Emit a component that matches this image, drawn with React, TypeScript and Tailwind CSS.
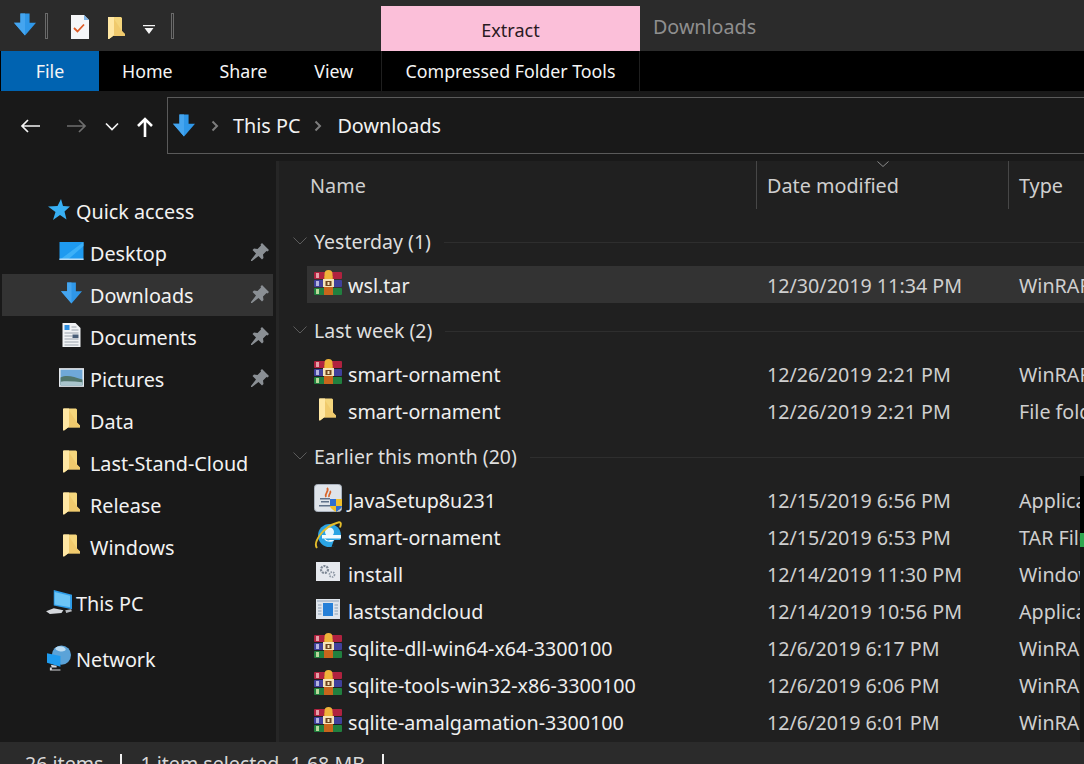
import React from 'react'

const FONT = "font-['Noto_Sans',sans-serif]"

function BlueArrow({ className }: { className?: string }) {
  return (
    <svg viewBox="0 0 24 24" className={className}>
      <path d="M7 0h10v10h7L12 24 0 10h7z" fill="#2f97e8" />
      <path d="M7 0h5v24L0 10h7z" fill="#45a5ef" />
    </svg>
  )
}

function Folder({ className }: { className?: string }) {
  return (
    <svg viewBox="0 0 17 23" className={className}>
      <path d="M1 1h12l1 1v13l3 3v2H5l-4 3z" fill="#f5d67c" />
      <path d="M0 1h6v18l-1 1-4 3H0z" fill="#ffe7a3" />
      <path d="M6 3l8 12 3 3v2H5l1-1z" fill="#eec566" opacity="0.7" />
    </svg>
  )
}

function Rar({ className }: { className?: string }) {
  return (
    <svg viewBox="0 0 28 25" className={className}>
      <rect x="0" y="2" width="28" height="7" rx="1" fill="#b0223f" />
      <rect x="0" y="10" width="28" height="7" rx="1" fill="#40409c" />
      <rect x="0" y="18" width="28" height="7" rx="1" fill="#21803f" />
      <rect x="2" y="3" width="3" height="5" fill="#e4a0a8" />
      <rect x="2" y="11" width="3" height="5" fill="#b5b5e0" />
      <rect x="2" y="19" width="3" height="5" fill="#b8d89a" />
      <rect x="10" y="6" width="9" height="19" fill="#c8651c" />
      <path d="M10.500 9V4a4 4 0 0 1 8 0v5z" fill="#efb33a" />
      <rect x="9" y="9" width="11" height="8" fill="#f4e3b8" />
      <rect x="11.500" y="11" width="6" height="5" fill="#6e4520" />
      <rect x="13.500" y="12" width="2" height="3" fill="#f4e3b8" />
    </svg>
  )
}

function Java({ className }: { className?: string }) {
  return (
    <svg viewBox="0 0 28 28" className={className}>
      <rect x="0.500" y="0.500" width="27" height="27" rx="3" fill="#dfe4ea" stroke="#a9b1bc" />
      <path d="M13 4c3 3-3 5-1 9M16 7c2 2-2 3-1 6" stroke="#d9662b" strokeWidth="1.800" fill="none" />
      <path d="M6 14h10v1.500H6zM7 17h8v1.500H7zM5 21h12v1.500H5z" fill="#5f7189" />
      <path d="M16 15h12v7c0 2-3 4-6 6-3-2-6-4-6-6z" fill="#f0c02e" />
      <path d="M16 15h6v7h-6zM22 22h6c0 2-3 4-6 6z" fill="#2f6fd0" />
    </svg>
  )
}

function Ie({ className }: { className?: string }) {
  return (
    <svg viewBox="0 0 28 28" className={className}>
      <circle cx="15.500" cy="14.500" r="11.500" fill="#2ba4e4" />
      <circle cx="15.500" cy="11" r="4.500" fill="#e8f6fd" />
      <rect x="8" y="14" width="19" height="3.500" fill="#f2fafe" />
      <path d="M20 19h7l-1.500 3-4 3.500-4 .5z" fill="#202020" />
      <path d="M10 17.500c1 3 7 5 10.500 1.500H16c-2 1-4 0-5-1.500z" fill="#f2fafe" />
      <path d="M3 27C-1 22 8 6 24 1.500c3-1 3.500 1 2 5" stroke="#e4bd2c" strokeWidth="1.900" fill="none" />
    </svg>
  )
}

function Install({ className }: { className?: string }) {
  return (
    <svg viewBox="0 0 24 19" className={className}>
      <rect width="24" height="19" fill="#e6e9ee" />
      <circle cx="8.500" cy="7.500" r="3.500" fill="none" stroke="#7d8794" strokeWidth="2.200" strokeDasharray="2 1" />
      <circle cx="16" cy="12.500" r="2.500" fill="none" stroke="#8c96a3" strokeWidth="1.700" strokeDasharray="1.500 1" />
    </svg>
  )
}

function AppWindow({ className }: { className?: string }) {
  return (
    <svg viewBox="0 0 24 20" className={className}>
      <rect width="24" height="20" fill="#dfe5ec" />
      <rect x="1" y="1" width="22" height="2" fill="#b8c4d2" />
      <rect x="7" y="4" width="10" height="13" fill="#2680d8" />
      <path d="M2 6h3.500M2 9h3.500M2 12h3.500M2 15h3.500M18.500 6H22M18.500 9H22M18.500 12H22M18.500 15H22" stroke="#8ea1b6" strokeWidth="1.200" />
    </svg>
  )
}

function TaskDoc({ className }: { className?: string }) {
  return (
    <svg viewBox="0 0 20 24" className={className}>
      <path d="M1 0h13l5 5v19H1z" fill="#f5f6f8" />
      <path d="M14 0l5 5h-5z" fill="#7fb4e6" />
      <path d="M4 13l3.500 3.500L14 9.500" stroke="#dd5a26" strokeWidth="1.800" fill="none" />
    </svg>
  )
}

function Star({ className }: { className?: string }) {
  return (
    <svg viewBox="0 0 22 22" className={className}>
      <path d="M13 0l2 7 7 .5-5.500 5 2 8-6.500-4.500L5 21l2.500-8L0 7.500 9.500 7z" fill="#38b0f4" />
    </svg>
  )
}

function Desktop({ className }: { className?: string }) {
  return (
    <svg viewBox="0 0 24 18" className={className}>
      <rect width="24" height="18" fill="#1e9af0" />
      <path d="M0 18L24 0v4L8 18z" fill="#3cb0f8" />
      <rect y="16.500" width="24" height="1.500" fill="#b9dcf5" />
    </svg>
  )
}

function Documents({ className }: { className?: string }) {
  return (
    <svg viewBox="0 0 18 24" className={className}>
      <path d="M0 0h13l5 5v19H0z" fill="#f1f3f5" />
      <path d="M2 2h5v5H2z" fill="#2f8fe0" />
      <path d="M2 10h14M2 13h8M2 16h14M2 19h14M2 22h14M9 4h5M9 7h7" stroke="#9aa3ad" strokeWidth="1" />
      <rect x="10" y="11.500" width="6" height="3.500" fill="#4a5f78" />
    </svg>
  )
}

function Pictures({ className }: { className?: string }) {
  return (
    <svg viewBox="0 0 24 18" className={className}>
      <rect width="24" height="18" fill="#e4e8ec" />
      <rect x="1.500" y="1.500" width="21" height="15" fill="#6fa8d8" />
      <path d="M1.500 9c6-3 12-1 21 2v5.500h-21z" fill="#51766c" />
      <path d="M1.500 13c7-1 14 0 21 .5v3h-21z" fill="#a9c4cc" />
    </svg>
  )
}

function ThisPc({ className }: { className?: string }) {
  return (
    <svg viewBox="0 0 28 26" className={className}>
      <path d="M8 0l19 5v15L8 16z" fill="#2d9ce8" />
      <path d="M9 2l16 4v12L9 15z" fill="#6cc4f5" />
      <path d="M0 22l8-3 10 2-2 3-12 1z" fill="#d5d8dc" />
      <path d="M20 21l6-1 1 2-6 2z" fill="#b6babf" />
    </svg>
  )
}

function Network({ className }: { className?: string }) {
  return (
    <svg viewBox="0 0 26 26" className={className}>
      <circle cx="15" cy="10" r="10" fill="#5ba3d8" />
      <path d="M9 2c4-2 8-1 10 1s-3 4-6 3-5-2-4-4z" fill="#bcdcf2" />
      <path d="M0 8l14 3v11L0 18z" fill="#1f9bee" />
      <path d="M4 20l6 1v2H5v2h9v1H3v-3h2z" fill="#d5d8dc" />
    </svg>
  )
}

function Pin() {
  return (
    <svg viewBox="0 0 18 18" className="w-[18px] h-[18px]">
      <path d="M11 0l7 7-1.500 1.500-1-.5-3.500 3.500.5 3.500-1.500 1.500-3.500-3.500L1 18H0v-1l5-6.500L1.500 7 3 5.500l3.500.5L10 2.500 9.500 1.500z" fill="#8a8f94" />
    </svg>
  )
}

function Chevron({ className }: { className?: string }) {
  return (
    <svg viewBox="0 0 8 12" className={className}>
      <path d="M1.500 1.500L6 6l-4.500 4.500" stroke="#7d7d7d" strokeWidth="2" fill="none" />
    </svg>
  )
}

function SideItem({ label, icon, pinned, selected }: { label: string, icon: React.ReactNode, pinned?: boolean, selected?: boolean }) {
  return (
    <div className={`h-[42px] ml-[2px] mr-[3px] pl-[56px] pr-[4px] pt-[2px] flex items-center ${selected ? 'bg-[#333333]' : ''}`}>
      <span className="w-[26px] mr-[6px] flex-none flex justify-center -translate-y-[3px]">{icon}</span>
      <span className="text-[19.8px] text-[#f2f2f2] leading-none">{label}</span>
      {pinned && <span className="ml-auto -translate-y-[2px]"><Pin /></span>}
    </div>
  )
}

function SideRoot({ label, icon, className }: { label: string, icon: React.ReactNode, className?: string }) {
  return (
    <div className={`h-[42px] ml-[2px] pl-[40px] pt-[2px] flex items-center ${className ?? ''}`}>
      <span className="w-[34px] flex-none flex justify-center -translate-y-[2px]">{icon}</span>
      <span className="text-[19.8px] text-[#f2f2f2] leading-none">{label}</span>
    </div>
  )
}

function GroupHeader({ label }: { label: string }) {
  return (
    <div className="h-[52px] flex items-center pl-[14px] pt-[4px]">
      <svg viewBox="0 0 14 8" className="w-[14px] h-[8px] flex-none mr-[7px] -translate-y-[1px]">
        <path d="M.5.500L7 7 13.500.500" stroke="#5c5c5c" fill="none" />
      </svg>
      <span className="text-[19.5px] text-[#dedede] leading-none whitespace-nowrap">{label}</span>
      <div className="h-px bg-[#2e2e2e] flex-1 ml-[13px]" />
    </div>
  )
}

function FileRow({ name, date, type, icon, selected }: { name: string, date: string, type: string, icon: React.ReactNode, selected?: boolean }) {
  return (
    <div className={`h-[37px] ml-[28px] pt-[2px] flex items-center whitespace-nowrap text-[19.7px] leading-none ${selected ? 'bg-[#333333]' : ''}`}>
      <span className="w-[41px] flex-none flex justify-center -translate-y-[3px]">{icon}</span>
      <span className="w-[419px] flex-none text-[#efefef]">{name}</span>
      <span className="w-[252px] flex-none text-[#cfcfcf]">{date}</span>
      <span className="text-[#cfcfcf]">{type}</span>
    </div>
  )
}

const rar = <Rar className="w-[28px] h-[25px]" />

export default function App() {
  return (
    <div className={`w-[1084px] h-[764px] overflow-hidden flex flex-col bg-[#191919] ${FONT}`}>
      {/* title bar */}
      <div className="h-[51px] flex-none bg-[#2b2b2b] flex items-end">
        <div className="h-[51px] w-[381px] flex-none flex items-start pl-[14px]">
          <BlueArrow className="w-[22px] h-[23px] mt-[13px]" />
          <div className="w-[3px] h-[26px] ml-[9px] mt-[13px] border border-[#6a6a6a]" />
          <TaskDoc className="w-[20px] h-[24px] ml-[22px] mt-[15px]" />
          <Folder className="w-[17px] h-[23px] ml-[18px] mt-[16px]" />
          <svg viewBox="0 0 12 9" className="w-[12px] h-[9px] ml-[18px] mt-[25px]">
            <path d="M0 0h12v1.200H0zM1.500 3h9L6 9z" fill="#f4f4f4" />
          </svg>
          <div className="w-[3px] h-[26px] ml-[16px] mt-[13px] border border-[#6a6a6a]" />
        </div>
        <div className="h-[45px] w-[259px] flex-none bg-[#fbbfd9] pt-[3px] flex items-center justify-center text-[18px] text-[#2a1a22]">Extract</div>
        <div className="h-[51px] pl-[13px] pt-[2px] flex items-center text-[19.7px] text-[#8f8f8f]">Downloads</div>
      </div>

      {/* ribbon tabs */}
      <div className="h-[40px] flex-none bg-black flex items-center text-[17.8px] text-[#f5f5f5] pl-px">
        <div className="w-[98px] h-full bg-[#0063b1] flex items-center justify-center">File</div>
        <div className="flex items-center w-[282px] pl-[23px] gap-[47px]">
          <span>Home</span>
          <span>Share</span>
          <span>View</span>
        </div>
        <div className="w-[259px] h-full border-x border-[#1f1f1f] flex items-center justify-center">Compressed Folder Tools</div>
      </div>

      {/* address bar */}
      <div className="h-[70px] flex-none flex items-center">
        <div className="w-[167px] flex-none flex items-center pl-[20px]">
          <svg viewBox="0 0 20 14" className="w-[20px] h-[14px]">
            <path d="M20 7H2M8 1L2 7l6 6" stroke="#f4f4f4" strokeWidth="1.700" fill="none" />
          </svg>
          <svg viewBox="0 0 20 14" className="w-[20px] h-[14px] ml-[27px]">
            <path d="M0 7h18M12 1l6 6-6 6" stroke="#6e6e6e" strokeWidth="1.700" fill="none" />
          </svg>
          <svg viewBox="0 0 14 9" className="w-[14px] h-[9px] ml-[18px]">
            <path d="M1 1.500L7 7.500l6-6" stroke="#f4f4f4" strokeWidth="1.700" fill="none" />
          </svg>
          <svg viewBox="0 0 16 20" className="w-[16px] h-[20px] ml-[18px] mt-[2px]">
            <path d="M8 20V2M1 9l7-7 7 7" stroke="#fff" strokeWidth="2.600" fill="none" />
          </svg>
        </div>
        <div className="h-[57px] flex-1 border-y border-l border-[#5a5a5a] flex items-center pl-[5px] -mt-[1px]">
          <BlueArrow className="w-[22px] h-[23px]" />
          <Chevron className="w-[8px] h-[12px] ml-[16px]" />
          <span className="ml-[14px] text-[19.8px] text-[#f2f2f2] leading-none pt-[1px]">This PC</span>
          <Chevron className="w-[8px] h-[12px] ml-[14px]" />
          <span className="ml-[15px] text-[19.8px] text-[#f2f2f2] leading-none pt-[1px]">Downloads</span>
        </div>
      </div>

      {/* body */}
      <div className="flex-1 min-h-0 flex">
        <aside className="w-[276px] flex-none bg-[#191919] pt-[29px]">
          <SideRoot label="Quick access" icon={<Star className="w-[22px] h-[22px]" />} />
          <SideItem label="Desktop" icon={<Desktop className="w-[25px] h-[18px]" />} pinned />
          <SideItem label="Downloads" icon={<BlueArrow className="w-[21px] h-[22px]" />} pinned selected />
          <SideItem label="Documents" icon={<Documents className="w-[19px] h-[24px]" />} pinned />
          <SideItem label="Pictures" icon={<Pictures className="w-[25px] h-[19px]" />} pinned />
          <SideItem label="Data" icon={<Folder className="w-[17px] h-[24px]" />} />
          <SideItem label="Last-Stand-Cloud" icon={<Folder className="w-[17px] h-[24px]" />} />
          <SideItem label="Release" icon={<Folder className="w-[17px] h-[24px]" />} />
          <SideItem label="Windows" icon={<Folder className="w-[17px] h-[24px]" />} />
          <SideRoot label="This PC" icon={<ThisPc className="w-[27px] h-[25px]" />} className="mt-[14px]" />
          <SideRoot label="Network" icon={<Network className="w-[25px] h-[26px]" />} className="mt-[14px]" />
        </aside>
        <div className="w-[3px] flex-none bg-[#262626]" />
        <main className="flex-1 min-w-0 bg-[#202020] overflow-hidden relative">
          <div className="h-[48px] flex items-stretch text-[19.8px] text-[#cfcfcf] leading-none">
            <div className="w-[478px] flex-none flex items-center pl-[31px] pt-[2px] border-r border-[#474747]">Name</div>
            <div className="w-[252px] flex-none flex items-center pl-[10px] pt-[2px] border-r border-[#474747] relative">
              Date modified
              <svg viewBox="0 0 12 6" className="absolute left-[120px] top-0 w-[12px] h-[6px]">
                <path d="M.5.500L6 5.500 11.500.500" stroke="#8a8a8a" fill="none" />
              </svg>
            </div>
            <div className="flex items-center pl-[10px] pt-[2px]">Type</div>
          </div>
          <div className="mt-[5px]">
            <GroupHeader label="Yesterday (1)" />
          </div>
          <FileRow name="wsl.tar" date="12/30/2019 11:34 PM" type="WinRAR archive" icon={rar} selected />
          <GroupHeader label="Last week (2)" />
          <FileRow name="smart-ornament" date="12/26/2019 2:21 PM" type="WinRAR archive" icon={rar} />
          <FileRow name="smart-ornament" date="12/26/2019 2:21 PM" type="File folder" icon={<Folder className="w-[17px] h-[24px]" />} />
          <GroupHeader label="Earlier this month (20)" />
          <FileRow name="JavaSetup8u231" date="12/15/2019 6:56 PM" type="Application" icon={<Java className="w-[28px] h-[28px]" />} />
          <FileRow name="smart-ornament" date="12/15/2019 6:53 PM" type="TAR File" icon={<Ie className="w-[28px] h-[28px]" />} />
          <FileRow name="install" date="12/14/2019 11:30 PM" type="Windows Installer" icon={<Install className="w-[24px] h-[19px]" />} />
          <FileRow name="laststandcloud" date="12/14/2019 10:56 PM" type="Application" icon={<AppWindow className="w-[24px] h-[20px]" />} />
          <FileRow name="sqlite-dll-win64-x64-3300100" date="12/6/2019 6:17 PM" type="WinRAR archive" icon={rar} />
          <FileRow name="sqlite-tools-win32-x86-3300100" date="12/6/2019 6:06 PM" type="WinRAR archive" icon={rar} />
          <FileRow name="sqlite-amalgamation-3300100" date="12/6/2019 6:01 PM" type="WinRAR archive" icon={rar} />
          {/* window behind peeking in on the right edge */}
          <div className="absolute right-0 top-[315px] h-[64px] w-[4px] bg-black" />
          <div className="absolute right-0 top-[372px] h-[14px] w-[4px] bg-[#2fa84f]" />
          <div className="absolute right-0 top-[386px] bottom-0 w-[4px] bg-[#161616]" />
        </main>
      </div>

      {/* status bar */}
      <div className="h-[22px] flex-none bg-[#2b2b2b] overflow-hidden flex items-start pl-[25px] pt-[10px] text-[19.6px] leading-[24px] text-[#d8d8d8] whitespace-nowrap">
        <span>26 items</span>
        <span className="w-[2px] h-[14px] mt-[2px] bg-[#f0f0f0] ml-[17px] mr-[18px]" />
        <span>1 item selected</span>
        <span className="ml-[11px]">1.68 MB</span>
        <span className="w-[2px] h-[14px] mt-[2px] bg-[#f0f0f0] ml-[17px]" />
      </div>
    </div>
  )
}
